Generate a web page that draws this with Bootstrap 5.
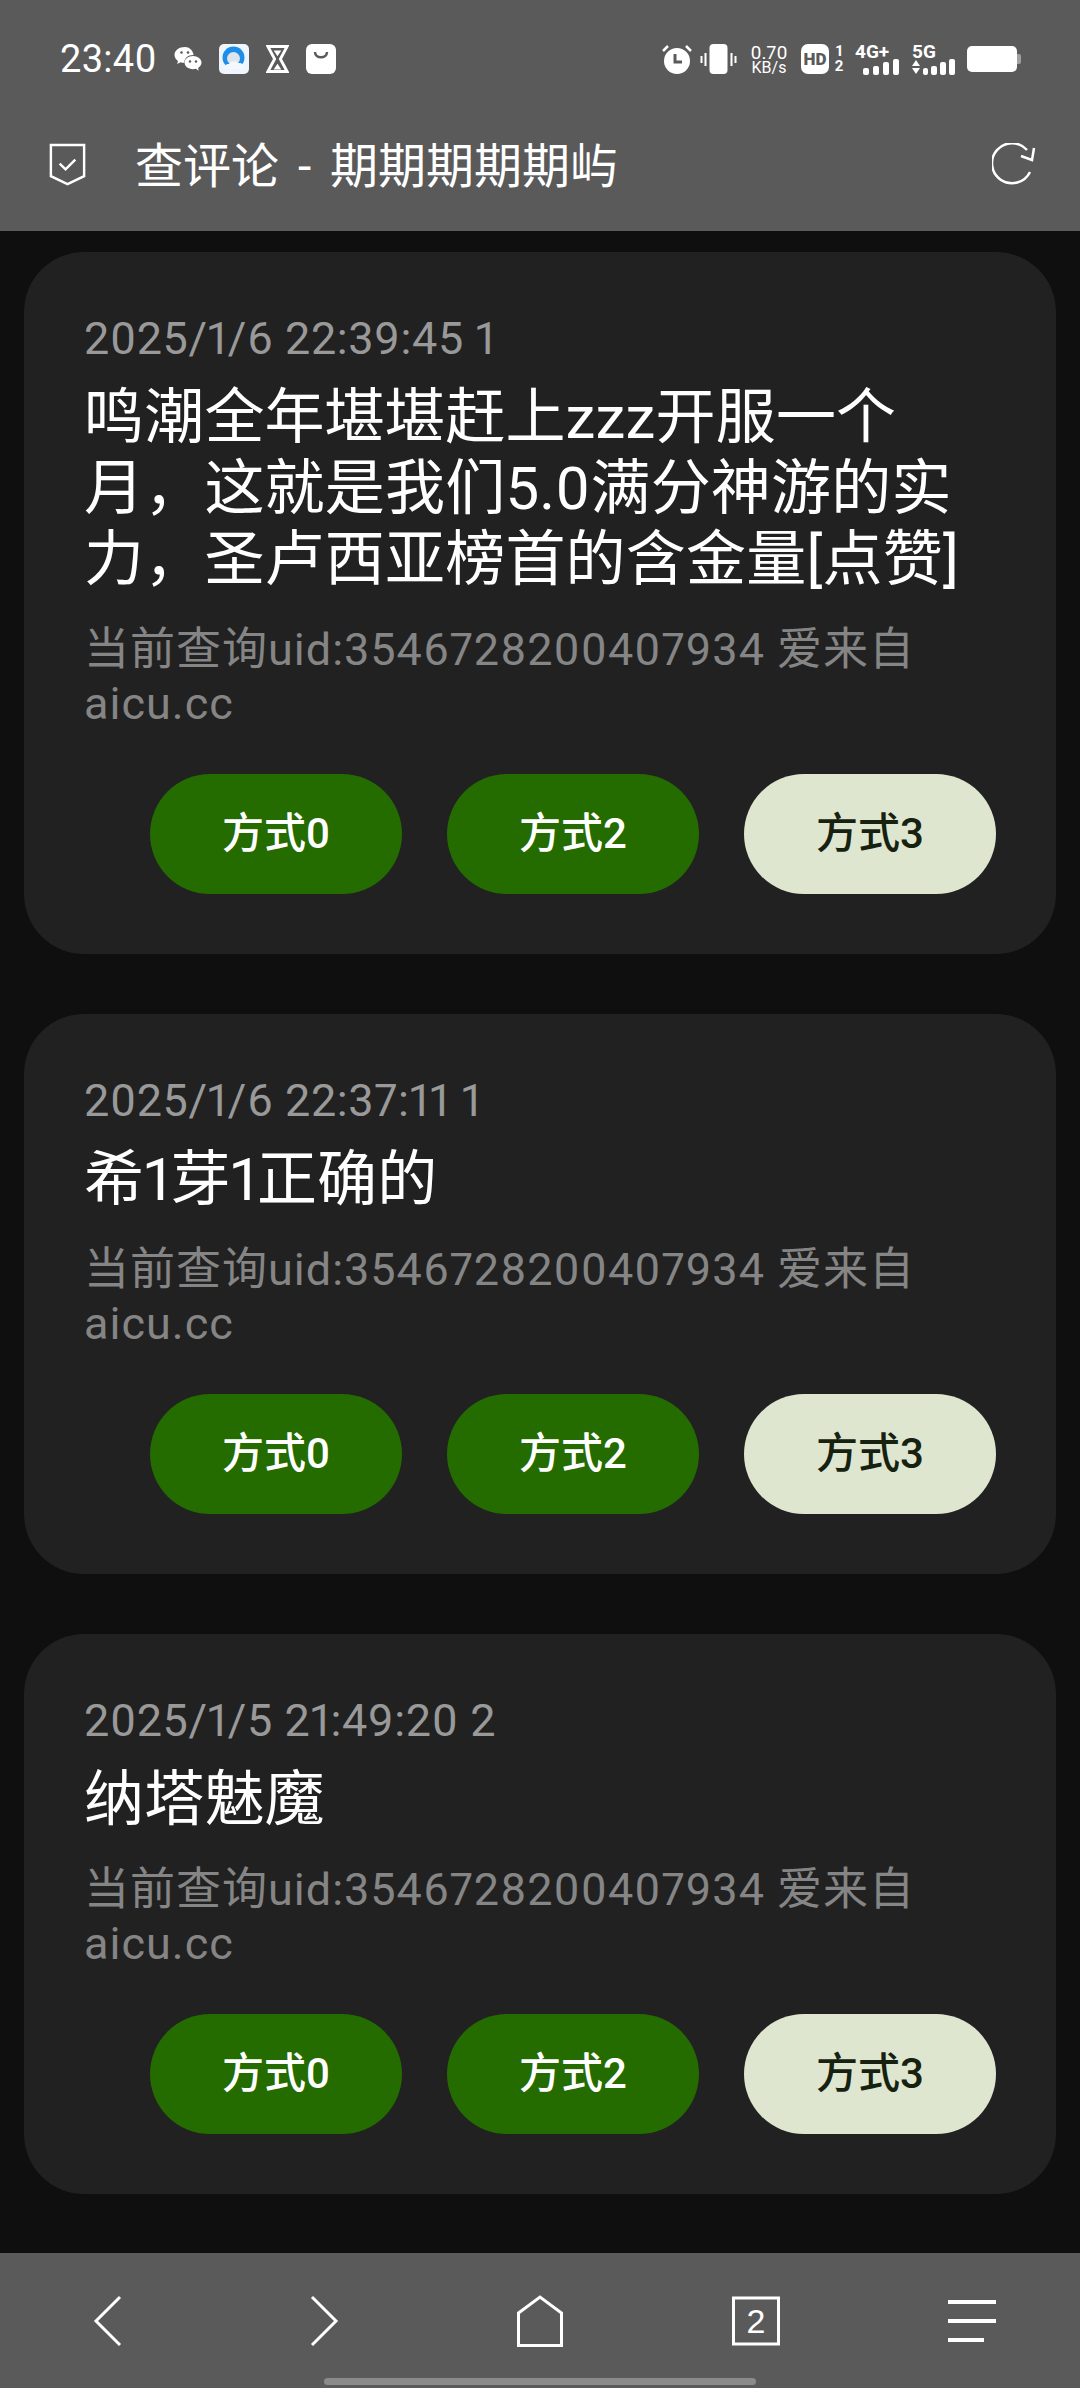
<!DOCTYPE html>
<html lang="zh-CN">
<head>
    <meta charset="UTF-8">
    <meta name="viewport" content="width=device-width, initial-scale=1.0">
    <title>查评论 - 期期期期期屿</title>
    <link href="https://cdn.jsdelivr.net/npm/bootstrap@5.3.0/dist/css/bootstrap.min.css" rel="stylesheet">
    <style>
        body {
            background-color: #0f0f0f;
            font-family: Roboto, "Noto Sans CJK SC", sans-serif;
            color: #fff;
            font-feature-settings: "pnum";
        }
        .app-shell { width: 1080px; height: 2388px; overflow: hidden; }
        .top-area { height: 231px; background-color: #5a5a5a; flex: none; }
        .status-bar { height: 120px; padding: 44px 59px 0 60px; }
        .status-time { font-size: 38px; line-height: 30px; letter-spacing: .3px; }
        .status-group { gap: 17px; }
        .status-right { height: 30px; }
        .speed-text { font-size: 16px; line-height: 13px; text-align: center; width: 38px; margin: 0 13px; }
        .speed-text span { display: block; }
        .speed-top { font-size: 19px; line-height: 17px; }
        .sim-num { font-size: 15px; font-weight: 700; line-height: 15px; text-align: center; margin: 0 10px 0 4px; width: 12px; }
        .net-text { font-size: 19px; font-weight: 700; line-height: 15px; white-space: nowrap; }
        .net-four { width: 45px; margin-right: 12px; }
        .net-five { width: 44px; margin-right: 11px; }
        .hd-box {
            width: 28px; height: 30px; background: #fff; color: #5a5a5a; border-radius: 7px;
            font-size: 17px; font-weight: 900; line-height: 30px; text-align: center;
        }
        .title-bar { height: 111px; padding: 0 44px 18px 48px; }
        .title-text { font-size: 48px; line-height: 60px; margin-left: 48px; word-spacing: 7px; }
        .comment-list { padding: 21px 24px 0; flex: 1 1 0; min-height: 0; overflow: hidden; }
        .comment-card {
            background-color: #212121; border: 0; border-radius: 60px;
            margin-bottom: 60px; color: #fff;
        }
        .comment-card .card-body { padding: 60px; }
        .comment-date { font-size: 45px; line-height: 54px; color: #999; margin-bottom: 16px; letter-spacing: .6px; }
        .comment-text { font-size: 60px; line-height: 71px; margin-bottom: 28px; letter-spacing: .2px; }
        .comment-uid { font-size: 45px; line-height: 54px; color: #858585; margin-bottom: 43px; letter-spacing: 1px; }
        .action-row { gap: 45px; }
        .action-btn {
            width: 252px; height: 120px; padding: 0; border: 0; font-size: 42px; font-weight: 500; line-height: 120px;
            border-radius: 60px;
        }
        .action-green, .action-green:hover { background-color: #246b00; color: #fff; }
        .action-pale, .action-pale:hover { background-color: #dfe6d0; color: #16210f; }
        .bottom-nav { height: 135px; background-color: #5a5a5a; flex: none; position: relative; }
        .nav-cell { width: 216px; height: 100%; }
        .tab-count { font-size: 34px; fill: #fff; font-family: "Liberation Sans", sans-serif; }
        .gesture-pill {
            position: absolute; left: 324px; bottom: 3px; width: 432px; height: 7px;
            background-color: #8b8b8b; border-radius: 4px;
        }
    </style>
</head>
<body>
    <div class="app-shell d-flex flex-column">
        <div class="top-area">
            <div class="status-bar d-flex justify-content-between align-items-start">
                <div class="d-flex align-items-center status-group">
                    <span class="status-time">23:40</span>
                    <!-- wechat -->
                    <svg width="28" height="26" viewBox="0 0 28 26"><path d="M11 1C5 1 .5 4.500.5 9c0 2.500 1.500 4.700 3.500 6l-.8 3 3.300-1.800c1.200.4 2.500.6 3.800.6-.3-4.500 3.800-8 9.300-7.800C18.800 4 15.300 1 11 1z" fill="#fff"/><path d="M19 10c-4.800 0-8.500 3-8.500 6.600s3.700 6.600 8.500 6.600c1 0 2-.1 2.900-.4l2.800 2-.6-2.900c2.200-1.300 3.400-3.200 3.400-5.300C27.500 13 23.800 10 19 10z" fill="#fff"/><circle cx="7.500" cy="6.500" r="1.300" fill="#5a5a5a"/><circle cx="14" cy="6.500" r="1.300" fill="#5a5a5a"/><circle cx="16" cy="15.500" r="1.200" fill="#5a5a5a"/><circle cx="22" cy="15.500" r="1.200" fill="#5a5a5a"/></svg>
                    <!-- browser -->
                    <svg width="30" height="30" viewBox="0 0 30 30"><rect width="30" height="30" rx="5" fill="#eef5fc"/><circle cx="14.500" cy="13.500" r="11" fill="#1c8de8"/><circle cx="14.500" cy="14.500" r="6.500" fill="#dfe3ea"/><path d="M5 25c0-3 2-5 5-5 1-3 7-4 9-1 4-.5 7 2 7 6z" fill="#f4f8fd"/></svg>
                    <!-- hourglass -->
                    <svg width="23" height="30" viewBox="0 0 24 30"><path d="M2 2h20l-7 13 7 13H2l7-13z" fill="none" stroke="#fff" stroke-width="3"/><path d="M8 6h8l-4 6zM12 20l4 6H8z" fill="#fff"/></svg>
                    <!-- bag -->
                    <svg width="30" height="30" viewBox="0 0 30 30"><rect width="30" height="30" rx="6" fill="#fff"/><path d="M9 8c0 7 12 7 12 0" fill="none" stroke="#5a5a5a" stroke-width="2.500"/></svg>
                </div>
                <div class="d-flex align-items-center status-right">
                    <!-- alarm -->
                    <svg width="30" height="30" viewBox="0 0 30 30" class="me-2"><circle cx="15" cy="17" r="13" fill="#fff"/><path d="M1 7l5-5M29 7l-5-5" stroke="#fff" stroke-width="2.500"/><path d="M13 10v8h7" fill="none" stroke="#5a5a5a" stroke-width="3"/></svg>
                    <!-- vibrate -->
                    <svg width="37" height="30" viewBox="0 0 36 30"><rect x="9" y="0" width="18" height="30" rx="4" fill="#fff"/><path d="M1 12v7M5 9v13M31 9v13M35 12v7" stroke="#fff" stroke-width="2"/></svg>
                    <div class="speed-text"><span class="speed-top">0.70</span><span>KB/s</span></div>
                    <div class="hd-box">HD</div>
                    <div class="sim-num"><div>1</div><div>2</div></div>
                    <div class="d-flex flex-column net-four">
                        <span class="net-text">4G+</span>
                        <svg width="36" height="16" viewBox="0 0 36 16" class="ms-2"><rect x="0" y="9" width="6" height="7" rx="2" fill="#fff"/><rect x="10" y="7" width="6" height="9" rx="2" fill="#fff"/><rect x="20" y="3" width="6" height="13" rx="2" fill="#fff"/><rect x="30" y="0" width="6" height="16" rx="2" fill="#fff"/></svg>
                    </div>
                    <div class="d-flex flex-column net-five">
                        <span class="net-text">5G</span>
                        <svg width="44" height="16" viewBox="0 0 44 16"><path d="M0 7l4-6 4 6zM0 9h8l-4 6z" fill="#fff"/><rect x="11" y="9" width="5" height="7" rx="2" fill="#fff"/><rect x="19" y="7" width="6" height="9" rx="2" fill="#fff"/><rect x="28" y="3" width="6" height="13" rx="2" fill="#fff"/><rect x="37" y="0" width="6" height="16" rx="2" fill="#fff"/></svg>
                    </div>
                    <!-- battery -->
                    <svg width="54" height="28" viewBox="0 0 54 28"><rect width="50" height="26" y="1" rx="5" fill="#fff"/><path d="M50 9h2a2 2 0 0 1 2 2v6a2 2 0 0 1-2 2h-2z" fill="#a0a0a0"/></svg>
                </div>
            </div>
            <div class="title-bar d-flex align-items-center">
                <svg width="39" height="43" viewBox="0 0 38 44" class="mb-1"><path d="M2 2h34v32L19 42 2 34z" fill="none" stroke="#fff" stroke-width="2.500"/><path d="M11 21l6 6 10-10" fill="none" stroke="#fff" stroke-width="2.500"/></svg>
                <span class="title-text flex-grow-1">查评论 - 期期期期期屿</span>
                <svg width="44" height="44" viewBox="0 0 44 44" class="mb-1"><path d="M38 29A20 20 0 1 1 35 7" fill="none" stroke="#fff" stroke-width="2.500"/><path d="M42 5l-2 12-11-4" fill="none" stroke="#fff" stroke-width="2.500"/></svg>
            </div>
        </div>

        <div class="comment-list">
            <div class="card comment-card">
                <div class="card-body">
                    <div class="comment-date">2025/1/6 22:39:45 1</div>
                    <div class="comment-text">鸣潮全年堪堪赶上zzz开服一个月，这就是我们5.0满分神游的实力，圣卢西亚榜首的含金量[点赞]</div>
                    <div class="comment-uid">当前查询uid:3546728200407934 爱来自aicu.cc</div>
                    <div class="d-flex justify-content-end action-row">
                        <button class="btn action-btn action-green">方式0</button>
                        <button class="btn action-btn action-green">方式2</button>
                        <button class="btn action-btn action-pale">方式3</button>
                    </div>
                </div>
            </div>
            <div class="card comment-card">
                <div class="card-body">
                    <div class="comment-date">2025/1/6 22:37:11 1</div>
                    <div class="comment-text">希1芽1正确的</div>
                    <div class="comment-uid">当前查询uid:3546728200407934 爱来自aicu.cc</div>
                    <div class="d-flex justify-content-end action-row">
                        <button class="btn action-btn action-green">方式0</button>
                        <button class="btn action-btn action-green">方式2</button>
                        <button class="btn action-btn action-pale">方式3</button>
                    </div>
                </div>
            </div>
            <div class="card comment-card">
                <div class="card-body">
                    <div class="comment-date">2025/1/5 21:49:20 2</div>
                    <div class="comment-text">纳塔魅魔</div>
                    <div class="comment-uid">当前查询uid:3546728200407934 爱来自aicu.cc</div>
                    <div class="d-flex justify-content-end action-row">
                        <button class="btn action-btn action-green">方式0</button>
                        <button class="btn action-btn action-green">方式2</button>
                        <button class="btn action-btn action-pale">方式3</button>
                    </div>
                </div>
            </div>
        </div>

        <div class="bottom-nav d-flex">
            <div class="nav-cell d-flex align-items-center justify-content-center"><svg width="30" height="52" viewBox="0 0 30 52"><path d="M27 2L3 26l24 24" fill="none" stroke="#fff" stroke-width="3"/></svg></div>
            <div class="nav-cell d-flex align-items-center justify-content-center"><svg width="30" height="52" viewBox="0 0 30 52"><path d="M3 2l24 24L3 50" fill="none" stroke="#fff" stroke-width="3"/></svg></div>
            <div class="nav-cell d-flex align-items-center justify-content-center"><svg width="46" height="52" viewBox="0 0 46 52"><path d="M1.500 18L23 2l21.500 16v32.500h-43z" fill="none" stroke="#fff" stroke-width="3"/></svg></div>
            <div class="nav-cell d-flex align-items-center justify-content-center"><svg width="48" height="50" viewBox="0 0 48 50"><rect x="1.500" y="2" width="45" height="46" fill="none" stroke="#fff" stroke-width="3"/><text x="24" y="37" text-anchor="middle" class="tab-count">2</text></svg></div>
            <div class="nav-cell d-flex align-items-center justify-content-center"><svg width="48" height="42" viewBox="0 0 48 42"><path d="M0 2h48M0 21h48M0 40h36" stroke="#fff" stroke-width="4"/></svg></div>
            <div class="gesture-pill"></div>
        </div>
    </div>
    <script src="https://cdn.jsdelivr.net/npm/bootstrap@5.3.0/dist/js/bootstrap.bundle.min.js"></script>
</body>
</html>
